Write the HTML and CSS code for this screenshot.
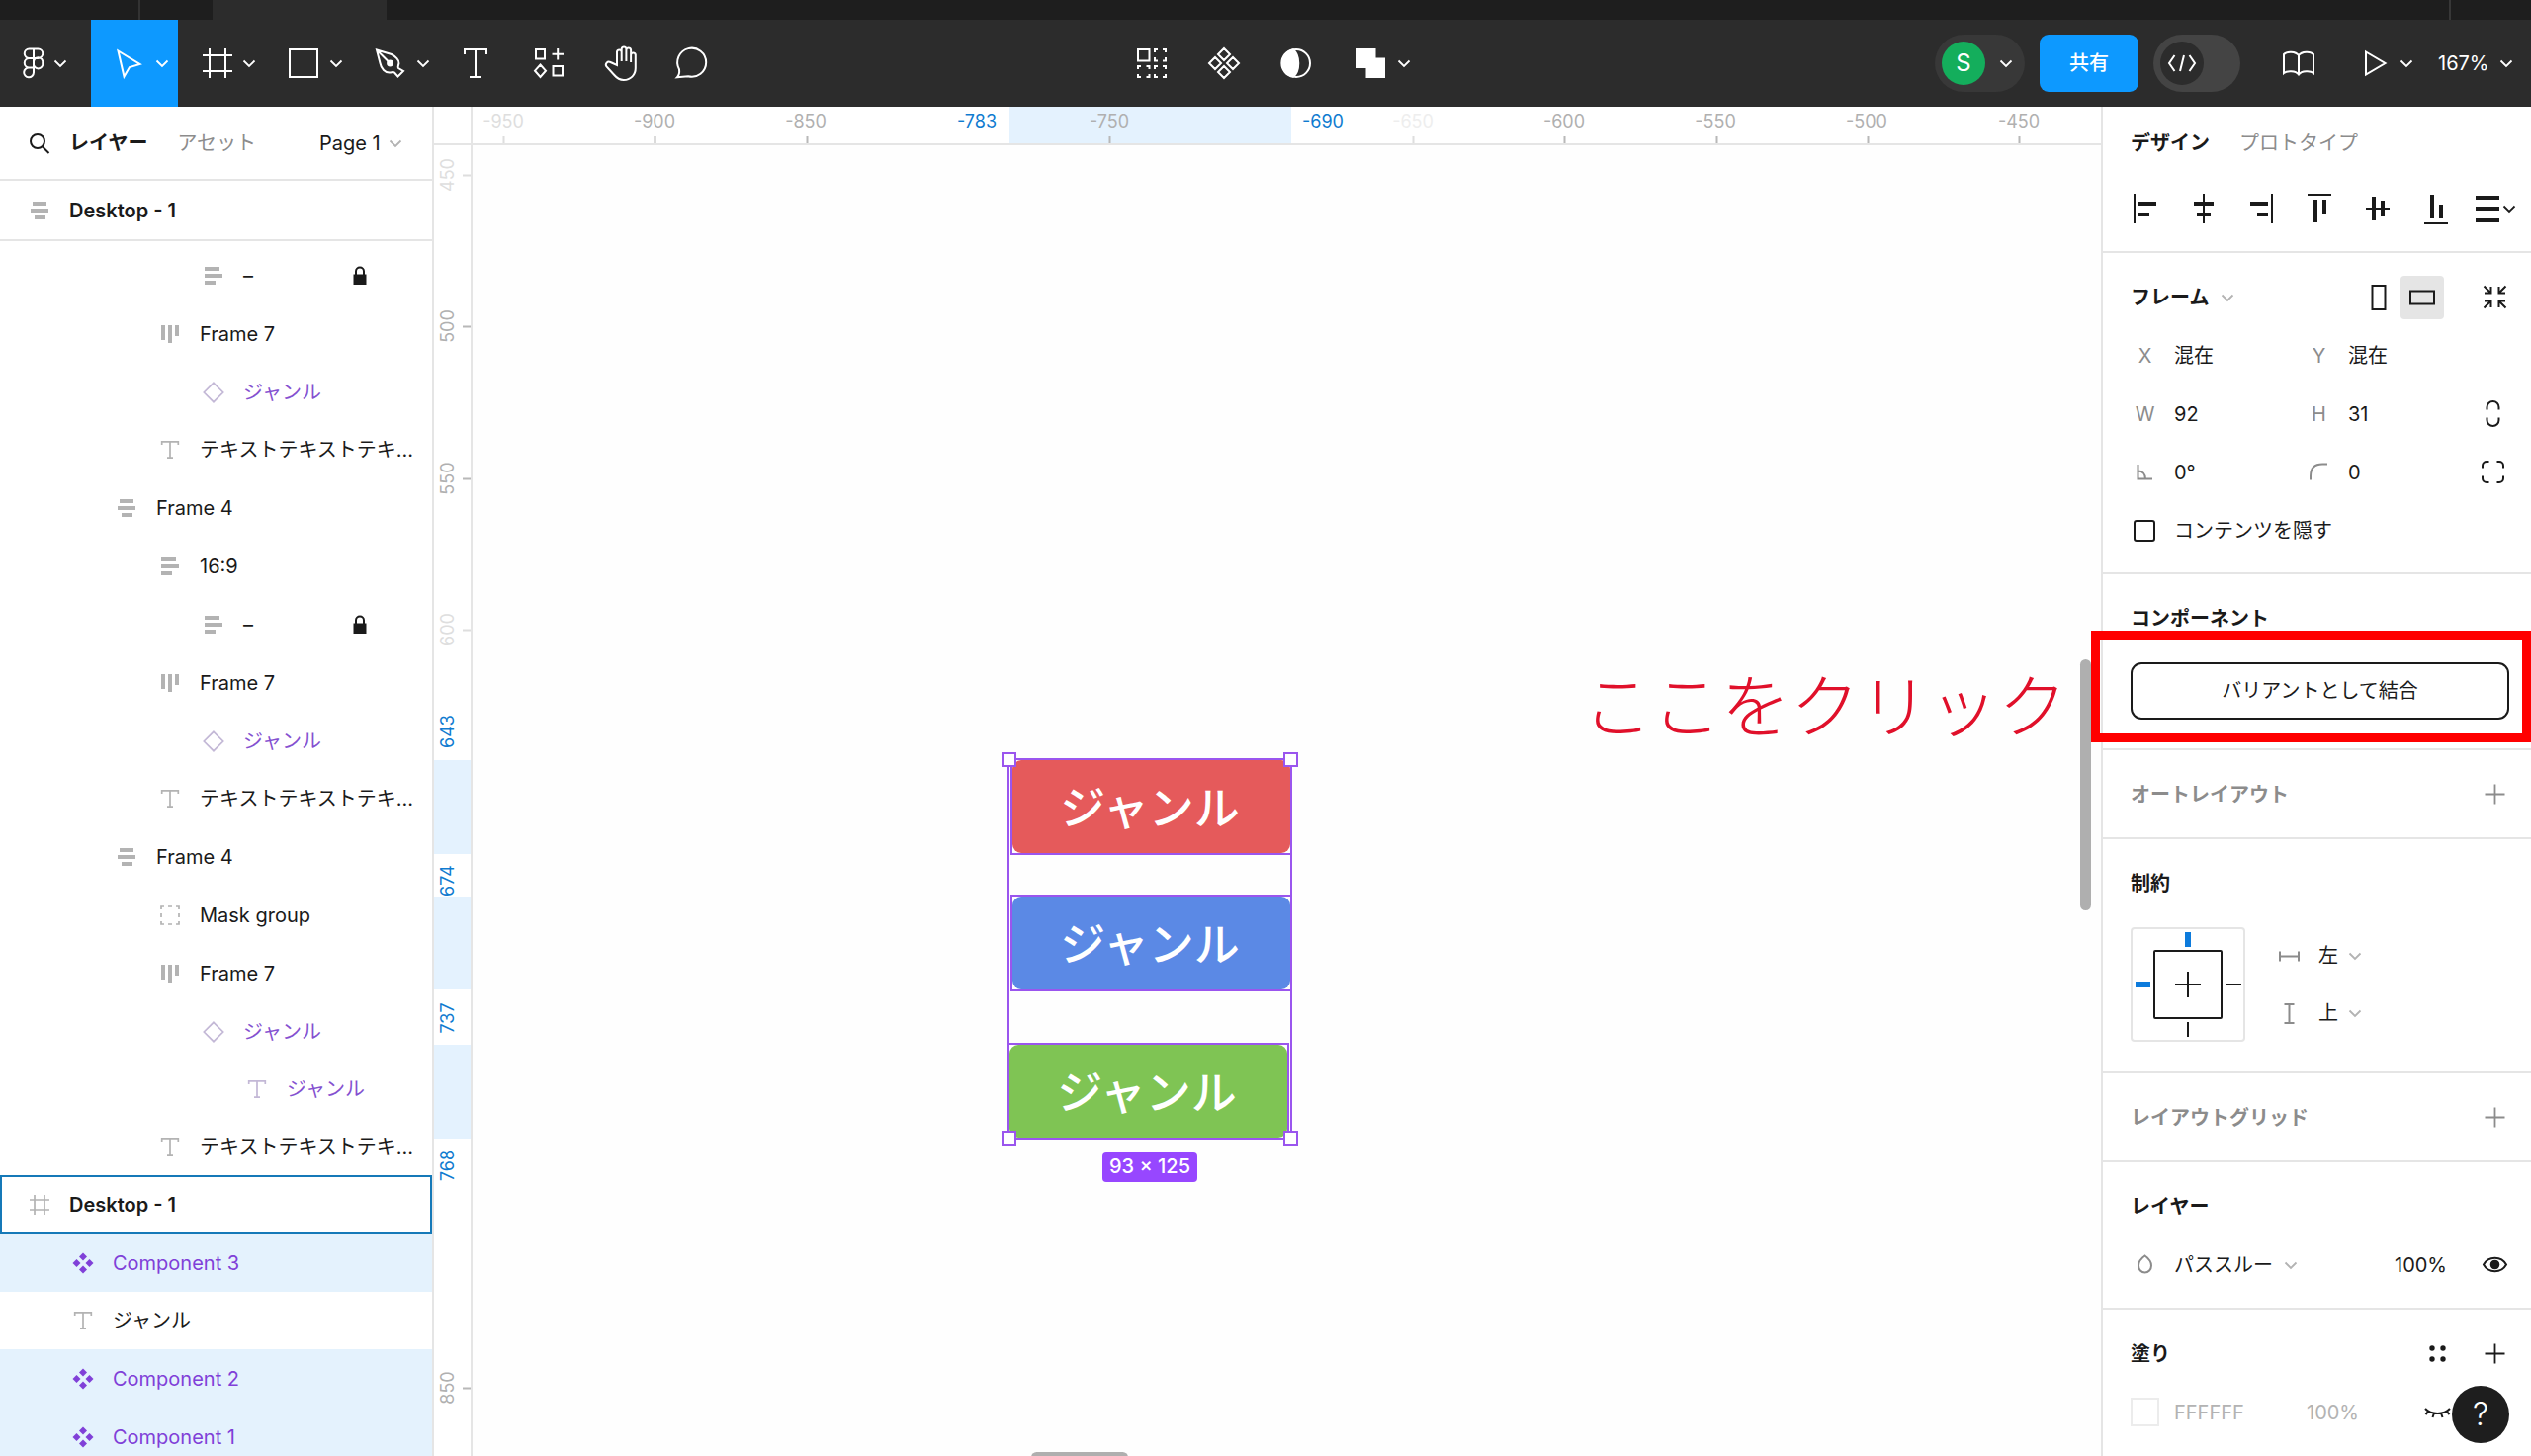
FILE: index.html
```html
<!DOCTYPE html>
<html lang="ja">
<head>
<meta charset="utf-8">
<title>Desktop - 1</title>
<link rel="stylesheet" href="styles.css">
</head>
<body>
<svg class="sprite" aria-hidden="true">
  <symbol id="chev" viewBox="0 0 14 14"><path d="M1.500 4.500 7 10l5.500-5.500" fill="none" stroke="currentColor" stroke-width="1.800"/></symbol>
  <symbol id="lines-left" viewBox="0 0 22 22"><path d="M2 2h15v4H2zM2 9h18v4H2zM2 16h11v4H2z" fill="currentColor"/></symbol>
  <symbol id="lines-center" viewBox="0 0 22 22"><path d="M4 2h14v4H4zM2 9h18v4H2zM6 16h11v4H6z" fill="currentColor"/></symbol>
  <symbol id="cols" viewBox="0 0 22 22"><path d="M2 2h4v15H2zM9 2h4v18H9zM16 2h4v11h-4z" fill="currentColor"/></symbol>
  <symbol id="text" viewBox="0 0 22 22"><path d="M2.700 6V2.800h16.600V6M11 2.800v16.400M8 19.200h6" fill="none" stroke="currentColor" stroke-width="1.700"/></symbol>
  <symbol id="diamond" viewBox="0 0 22 22"><path d="M11 1.300 20.700 11 11 20.700 1.300 11z" fill="none" stroke="currentColor" stroke-width="1.700"/></symbol>
  <symbol id="mask" viewBox="0 0 22 22"><path d="M2 5V2h3M9 2h4M17 2h3v3M20 9v4M20 17v3h-3M13 20H9M5 20H2v-3M2 13V9" fill="none" stroke="currentColor" stroke-width="1.700"/></symbol>
  <symbol id="frame" viewBox="0 0 22 22"><path d="M6 1v20M16 1v20M1 6h20M1 16h20" fill="none" stroke="currentColor" stroke-width="1.700"/></symbol>
  <symbol id="comp" viewBox="0 0 22 22"><path d="M11 .5 15 4.500 11 8.500 7 4.500zM11 13.500l4 4-4 4-4-4zM4.500 7l4 4-4 4-4-4zM17.500 7l4 4-4 4-4-4z" fill="currentColor"/></symbol>
  <symbol id="lock" viewBox="0 0 22 22"><path d="M4.500 9.500h13V20h-13z" fill="currentColor"/><path d="M7 10V6.500a4 4 0 0 1 8 0V10" fill="none" stroke="currentColor" stroke-width="2"/></symbol>
  <symbol id="plus" viewBox="0 0 29 29"><path d="M14.500 4.500v20M4.500 14.500h20" fill="none" stroke="currentColor" stroke-width="1.800"/></symbol>
</svg>

<div class="tabstrip">
  <span class="tab tab-home"></span><span class="tab tab-file"></span><span class="tab tab-current"></span><span class="tab-end"></span>
</div>

<header class="toolbar">
  <div class="tools">
    <button class="tool tool-menu" aria-label="メインメニュー"><svg class="ic40" viewBox="0 0 40 40"><path d="M20 5.500h-4.500a4.700 4.700 0 0 0 0 9.500H20zM20 5.500h4.500a4.700 4.700 0 0 1 0 9.500H20zM20 15h-4.500a4.700 4.700 0 0 0 0 9.500H20zM20 24.500h-4.500a4.900 4.900 0 1 0 4.500 5zM29.200 19.800a4.700 4.700 0 1 1-9.200 0 4.700 4.700 0 1 1 9.200 0z"/></svg><svg class="chev"><use href="#chev"/></svg></button>
    <button class="tool tool-on" aria-label="移動"><svg class="ic40" viewBox="0 0 40 40"><path d="M7.500 7.500 29.500 21l-10.500 3-5.500 9.500z"/></svg><svg class="chev"><use href="#chev"/></svg></button>
    <button class="tool" aria-label="フレーム"><svg class="ic40" viewBox="0 0 40 40"><path d="M12 5v30M28 5v30M5 12h30M5 28h30"/></svg><svg class="chev"><use href="#chev"/></svg></button>
    <button class="tool" aria-label="長方形"><svg class="ic40" viewBox="0 0 40 40"><path d="M5 6h28v28H5z"/></svg><svg class="chev"><use href="#chev"/></svg></button>
    <button class="tool" aria-label="ペン"><svg class="ic40" viewBox="0 0 40 40"><path d="M5 6.500 20 11c4 2 8 6 7.500 9-.3 2-1.500 4-.5 5l5 3-5.500 5.500-3.500-4c-1.500-1-3 0-4.500 0-5 .5-9-4-10-9.500zM5 6.500 18 19.500"/><circle cx="18.500" cy="20" r="2.400" fill="currentColor"/></svg><svg class="chev"><use href="#chev"/></svg></button>
    <button class="tool tool-solo" aria-label="テキスト"><svg class="ic40" viewBox="0 0 40 40"><path d="M9 11V6h22v5M20 6v28M14 34h12"/></svg></button>
    <button class="tool tool-solo" aria-label="リソース"><svg class="ic40" viewBox="0 0 40 40"><path d="M8 6h9v9.500H8zM25.500 23H35v9.500h-9.500zM12.500 21.500 18 27.700 12.500 34 7 27.700zM30.200 5v11.500M24.500 10.700H36"/></svg></button>
    <button class="tool tool-solo" aria-label="手のひら"><svg class="ic40" viewBox="0 0 40 40"><path d="M13 22V8.500a2.400 2.400 0 0 1 4.700 0V18 5.500a2.400 2.400 0 0 1 4.700 0V18 6.500a2.400 2.400 0 0 1 4.700 0V19v-7.500a2.400 2.400 0 0 1 4.700 0V25c0 7-5 12-12 12-4 0-7-2-9.500-5L2.500 23.500c-2-3 1-6 4-4.500z" transform="translate(4)"/></svg></button>
    <button class="tool tool-solo" aria-label="コメント"><svg class="ic40" viewBox="0 0 40 40"><path d="M5 34.200c2-2 2.500-4 2-8A14.500 14.500 0 1 1 16 33.200z"/></svg></button>
  </div>
  <div class="tools tools-mid">
    <button class="tool tool-solo" aria-label="コンポーネントセット"><svg class="ic40" viewBox="0 0 40 40"><path d="M6 6h11.500v11.500H6zM23 9V6h3M31 6h3v3M34 14v3.500h-3M26 17.500h-3V14M6 26v-3h3M14.500 23h3v3M17.500 31v3h-3M9 34H6v-3M23 26v-3h3M31 23h3v3M34 31v3h-3M26 34h-3v-3"/></svg></button>
    <button class="tool tool-solo" aria-label="コンポーネントの作成"><svg class="ic40" viewBox="0 0 40 40"><path d="M20 5l6 6-6 6-6-6zM20 23l6 6-6 6-6-6zM11 14l6 6-6 6-6-6zM29 14l6 6-6 6-6-6z"/></svg></button>
    <button class="tool tool-solo" aria-label="マスク"><svg class="ic40" viewBox="0 0 40 40"><circle cx="20" cy="20" r="14"/><path d="M17 6.200C24 12 24 28 17 33.800A14 14 0 0 1 17 6.200z" fill="currentColor"/></svg></button>
    <button class="tool" aria-label="ブール演算"><svg class="ic40" viewBox="0 0 40 40"><path d="M4 5h19.500v9.500H33V35H13.500V25H4z" fill="currentColor" stroke="none"/></svg><svg class="chev"><use href="#chev"/></svg></button>
  </div>
  <div class="actions">
    <button class="user" aria-label="ユーザー"><span class="avatar">S</span><svg class="chev"><use href="#chev"/></svg></button>
    <button class="share">共有</button>
    <button class="devmode" role="switch" aria-checked="false" aria-label="開発モード"><span class="knob"><svg class="code" viewBox="0 0 32 24"><path d="M8.500 4 3 12l5.500 8M23.500 4 29 12l-5.500 8M18 4l-4 16"/></svg></span></button>
    <button class="plain" aria-label="ライブラリ"><svg class="ic40" viewBox="0 0 40 40"><path d="M20 12c-3-4-12-4.500-15-1v19c3-2.500 12-2.500 15 1.500 3-4 12-4 15-1.500V11c-3-3.500-12-3-15 1zM20 12v19"/></svg></button>
    <button class="present" aria-label="プレゼンテーション"><svg class="play" viewBox="0 0 24 30"><path d="M2 3.500 21.500 15 2 26.500z"/></svg><svg class="chev"><use href="#chev"/></svg></button>
    <label class="zoom"><select aria-label="ズーム"><option>167%</option></select><svg class="chev"><use href="#chev"/></svg></label>
  </div>
</header>

<main class="work">
  <aside class="layers">
    <div class="layers-head">
      <svg class="search" viewBox="0 0 22 22"><circle cx="9" cy="9" r="7"/><path d="M14 14.500 20.500 21"/></svg>
      <button class="ptab ptab-on">レイヤー</button>
      <button class="ptab">アセット</button>
      <label class="page"><select aria-label="ページ"><option>Page 1</option></select><svg class="chev dim"><use href="#chev"/></svg></label>
    </div>
    <div class="layers-pin"><svg class="ic22"><use href="#lines-center"/></svg><span>Desktop - 1</span></div>
    <ul class="tree">
      <li class="row d4"><svg class="ic22"><use href="#lines-left"/></svg><span>–</span><svg class="ic22 lock"><use href="#lock"/></svg></li>
      <li class="row d3"><svg class="ic22"><use href="#cols"/></svg><span>Frame 7</span></li>
      <li class="row d4 inst"><svg class="ic22"><use href="#diamond"/></svg><span>ジャンル</span></li>
      <li class="row d3 txt"><svg class="ic22"><use href="#text"/></svg><span>テキストテキストテキ...</span></li>
      <li class="row d2"><svg class="ic22"><use href="#lines-center"/></svg><span>Frame 4</span></li>
      <li class="row d3"><svg class="ic22"><use href="#lines-left"/></svg><span>16:9</span></li>
      <li class="row d4"><svg class="ic22"><use href="#lines-left"/></svg><span>–</span><svg class="ic22 lock"><use href="#lock"/></svg></li>
      <li class="row d3"><svg class="ic22"><use href="#cols"/></svg><span>Frame 7</span></li>
      <li class="row d4 inst"><svg class="ic22"><use href="#diamond"/></svg><span>ジャンル</span></li>
      <li class="row d3 txt"><svg class="ic22"><use href="#text"/></svg><span>テキストテキストテキ...</span></li>
      <li class="row d2"><svg class="ic22"><use href="#lines-center"/></svg><span>Frame 4</span></li>
      <li class="row d3"><svg class="ic22"><use href="#mask"/></svg><span>Mask group</span></li>
      <li class="row d3"><svg class="ic22"><use href="#cols"/></svg><span>Frame 7</span></li>
      <li class="row d4 inst"><svg class="ic22"><use href="#diamond"/></svg><span>ジャンル</span></li>
      <li class="row d5 inst txt"><svg class="ic22"><use href="#text"/></svg><span>ジャンル</span></li>
      <li class="row d3 txt"><svg class="ic22"><use href="#text"/></svg><span>テキストテキストテキ...</span></li>
      <li class="row d0 outlined"><svg class="ic22"><use href="#frame"/></svg><span>Desktop - 1</span></li>
      <li class="row d1 picked"><svg class="ic22"><use href="#comp"/></svg><span>Component 3</span></li>
      <li class="row d1 txt"><svg class="ic22"><use href="#text"/></svg><span>ジャンル</span></li>
      <li class="row d1 picked"><svg class="ic22"><use href="#comp"/></svg><span>Component 2</span></li>
      <li class="row d1 picked"><svg class="ic22"><use href="#comp"/></svg><span>Component 1</span></li>
    </ul>
  </aside>

  <section class="stage">
    <div class="corner"></div>
    <svg class="ruler ruler-x">
      <rect class="span" x="543" y="0" width="285" height="37"/>
      <path class="tick" d="M184.500 30v7M338.500 30v7M644.500 30v7M1104.500 30v7M1258.500 30v7M1411.500 30v7M1564.500 30v7"/>
      <path class="tick faint" d="M31.500 30v7M951.500 30v7"/>
      <g class="marks">
        <text class="faint" x="31" y="21">-950</text><text x="184" y="21">-900</text><text x="337" y="21">-850</text>
        <text class="edge" x="510" y="21">-783</text><text x="644" y="21">-750</text><text class="edge" x="860" y="21">-690</text>
        <text class="fainter" x="951" y="21">-650</text><text x="1104" y="21">-600</text><text x="1257" y="21">-550</text><text x="1410" y="21">-500</text><text x="1564" y="21">-450</text>
      </g>
    </svg>
    <svg class="ruler ruler-y">
      <path class="span" d="M0 622h37v95H0zM0 760h37v94H0zM0 910h37v95H0z"/>
      <path class="tick" d="M29 183.500h8M29 337.500h8M29 1257.500h8"/>
      <path class="tick faint" d="M29 30.500h8M29 490.500h8"/>
      <g class="marks">
        <text class="faint" transform="translate(20 30) rotate(-90)">450</text>
        <text transform="translate(20 183) rotate(-90)">500</text>
        <text transform="translate(20 337) rotate(-90)">550</text>
        <text class="faint" transform="translate(20 490) rotate(-90)">600</text>
        <text class="edge" transform="translate(20 593) rotate(-90)">643</text>
        <text class="edge" transform="translate(20 744) rotate(-90)">674</text>
        <text class="edge" transform="translate(20 883) rotate(-90)">737</text>
        <text class="edge" transform="translate(20 1032) rotate(-90)">768</text>
        <text transform="translate(20 1257) rotate(-90)">850</text>
      </g>
    </svg>
    <div class="canvas">
      <div class="selection">
        <div class="node node-red"><span>ジャンル</span></div>
        <div class="node node-blue"><span>ジャンル</span></div>
        <div class="node node-green"><span>ジャンル</span></div>
        <i class="grip nw"></i><i class="grip ne"></i><i class="grip sw"></i><i class="grip se"></i>
        <div class="size">93 × 125</div>
      </div>
      <div class="note">ここをクリック</div>
      <div class="bar-y"></div>
      <div class="bar-x"></div>
    </div>
  </section>

  <aside class="inspector">
    <div class="itabs"><button class="ptab ptab-on">デザイン</button><button class="ptab">プロトタイプ</button></div>
    <div class="aligns">
      <button aria-label="左揃え"><svg viewBox="0 0 30 30"><path d="M3 0h2v30H3zM8 8h18v4H8zM8 19h11v4H8z"/></svg></button>
      <button aria-label="水平方向の中央揃え"><svg viewBox="0 0 30 30"><path d="M14 0h2v30h-2zM5 8h20v4H5zM8 19h14v4H8z"/></svg></button>
      <button aria-label="右揃え"><svg viewBox="0 0 30 30"><path d="M25 0h2v30h-2zM4 8h18v4H4zM11 19h11v4H11z"/></svg></button>
      <button aria-label="上揃え"><svg viewBox="0 0 30 30"><path d="M3 0h24v2H3zM9 6h4v23H9zM18 6h4v14h-4z"/></svg></button>
      <button aria-label="垂直方向の中央揃え"><svg viewBox="0 0 30 30"><path d="M3 14h24v2H3zM9 3h4v24H9zM18 7h4v16h-4z"/></svg></button>
      <button aria-label="下揃え"><svg viewBox="0 0 30 30"><path d="M3 29h24v2H3zM9 1h4v24H9zM18 11h4v14h-4z"/></svg></button>
      <button class="more" aria-label="整列"><svg viewBox="0 0 24 30"><path d="M0 2h24v4H0zM0 13h24v4H0zM0 25h24v4H0z"/></svg><svg class="chev"><use href="#chev"/></svg></button>
    </div>

    <section class="sec sec-frame">
      <div class="title">
        <label class="pick"><select class="strong" aria-label="種類"><option>フレーム</option></select><svg class="chev dim"><use href="#chev"/></svg></label>
        <span class="push"></span>
        <button class="orient" aria-label="縦向き"><svg viewBox="0 0 44 44"><path d="M15.500 10h13v24h-13z"/></svg></button>
        <button class="orient orient-on" aria-label="横向き"><svg viewBox="0 0 44 44"><path d="M10 15.500h24v13H10z"/></svg></button>
        <button class="iconbtn shrink" aria-label="サイズを内容に合わせる"><svg class="ic29 line" viewBox="0 0 29 29"><path d="M3.500 3.500l7 7M10.500 4v6.500H4M25.500 3.500l-7 7M18.500 4v6.500H25M3.500 25.500l7-7M10.500 25v-6.500H4M25.500 25.500l-7-7M18.500 25v-6.500H25"/></svg></button>
      </div>
      <div class="fields">
        <label class="field"><span class="tag">X</span><input value="混在"></label>
        <label class="field"><span class="tag">Y</span><input value="混在"></label>
        <span></span>
        <label class="field"><span class="tag">W</span><input value="92"></label>
        <label class="field"><span class="tag">H</span><input value="31"></label>
        <button class="iconbtn" aria-label="縦横比を固定"><svg class="ic29 line" viewBox="0 0 29 29"><path d="M8.500 10.500V8a6 6 0 0 1 12 0v2.500M8.500 18.500V21a6 6 0 0 0 12 0v-2.500"/></svg></button>
        <label class="field"><span class="tag"><svg class="ic29 line" viewBox="0 0 29 29"><path d="M7.500 7v14.500H22M7.500 13.500c4.500 0 7.500 3 7.500 8"/></svg></span><input aria-label="回転" value="0°"></label>
        <label class="field"><span class="tag"><svg class="ic29 line" viewBox="0 0 29 29"><path d="M6 22.500v-4C6 11 10 6.500 18 6.500h5"/></svg></span><input aria-label="角の半径" value="0"></label>
        <button class="iconbtn" aria-label="個別の角"><svg class="ic29 line" viewBox="0 0 29 29"><path d="M4 10.500V8a4 4 0 0 1 4-4h2.500M18.500 4H21a4 4 0 0 1 4 4v2.500M25 18.500V21a4 4 0 0 1-4 4h-2.500M10.500 25H8a4 4 0 0 1-4-4v-2.500"/></svg></button>
      </div>
      <label class="check"><input type="checkbox"><span>コンテンツを隠す</span></label>
    </section>

    <section class="sec sec-comp">
      <div class="title"><h2>コンポーネント</h2></div>
      <button class="combine">バリアントとして結合</button>
      <div class="callout"></div>
    </section>

    <section class="sec">
      <div class="title off"><h2>オートレイアウト</h2><span class="push"></span><button class="iconbtn" aria-label="追加"><svg class="ic29"><use href="#plus"/></svg></button></div>
    </section>

    <section class="sec sec-limits">
      <div class="title"><h2>制約</h2></div>
      <div class="limits">
        <svg class="pinbox" viewBox="0 0 116 116"><rect x="1" y="1" width="114" height="114" rx="3" fill="#fff" stroke="#e5e5e5" stroke-width="2"/><rect x="24" y="24" width="68" height="68" rx="1" fill="none" stroke="#1a1a1a" stroke-width="2"/><path d="M58 45v26M45 58h26M97 58h15M58 96v15" stroke="#1a1a1a" stroke-width="2"/><path d="M58 5v15M5 58h15" stroke="#0d7bdc" stroke-width="6"/></svg>
        <div class="axes">
          <label class="axis"><svg class="ic29 line gray" viewBox="0 0 29 29"><path d="M5 9.500v10M24 9.500v10M5 14.500h19"/></svg><select aria-label="水平方向の制約"><option>左</option></select><svg class="chev dim"><use href="#chev"/></svg></label>
          <label class="axis"><svg class="ic29 line gray" viewBox="0 0 29 29"><path d="M9.500 5h10M9.500 24h10M14.500 5v19"/></svg><select aria-label="垂直方向の制約"><option>上</option></select><svg class="chev dim"><use href="#chev"/></svg></label>
        </div>
      </div>
    </section>

    <section class="sec">
      <div class="title off"><h2>レイアウトグリッド</h2><span class="push"></span><button class="iconbtn" aria-label="追加"><svg class="ic29"><use href="#plus"/></svg></button></div>
    </section>

    <section class="sec">
      <div class="title"><h2>レイヤー</h2></div>
      <div class="line-row">
        <svg class="ic29 line gray" viewBox="0 0 29 29"><path d="M14.500 5.500c3.500 2.500 6.500 6 6.500 10a6.500 7 0 0 1-13 0c0-4 3-7.500 6.500-10z"/></svg>
        <label class="pick blend"><select aria-label="描画モード"><option>パススルー</option></select><svg class="chev dim"><use href="#chev"/></svg></label>
        <span class="push"></span>
        <input class="pct" aria-label="不透明度" value="100%">
        <button class="iconbtn" aria-label="表示"><svg class="ic29 line" viewBox="0 0 29 29"><path d="M3 14.500c5-9 18-9 23 0-5 9-18 9-23 0z"/><circle cx="14.500" cy="14.500" r="3.800" fill="currentColor"/></svg></button>
      </div>
    </section>

    <section class="sec sec-fill">
      <div class="title"><h2>塗り</h2><span class="push"></span>
        <button class="iconbtn" aria-label="スタイル"><svg class="ic29" viewBox="0 0 29 29"><g fill="currentColor"><circle cx="9" cy="9" r="2.700"/><circle cx="20" cy="9" r="2.700"/><circle cx="9" cy="20" r="2.700"/><circle cx="20" cy="20" r="2.700"/></g></svg></button>
        <button class="iconbtn" aria-label="追加"><svg class="ic29"><use href="#plus"/></svg></button></div>
      <div class="line-row faded">
        <button class="swatch" aria-label="色"></button>
        <input class="hex" aria-label="カラーコード" value="FFFFFF">
        <input class="pct" aria-label="塗りの不透明度" value="100%">
        <span class="push"></span>
        <button class="iconbtn dark" aria-label="非表示"><svg class="ic29 line" viewBox="0 0 29 29"><path d="M2 11c6 6.500 19 6.500 25 0M5.500 13.500 2.500 17M11 15.500l-1.500 4.500M18 15.500l1.500 4.500M23.500 13.500l3 3.500"/></svg></button>
        <span class="iconbtn"></span>
      </div>
    </section>
    <button class="help" aria-label="ヘルプ"><span>?</span></button>
  </aside>
</main>
</body>
</html>
```

FILE: styles.css
```css
* { box-sizing: border-box; }

body {
  margin: 0;
  height: 100vh;
  display: flex;
  flex-direction: column;
  overflow: hidden;
  background: #fff;
  color: #1a1a1a;
  font: 400 20px/28px Inter, "Noto Sans CJK JP", sans-serif;
}

button, select, input {
  margin: 0;
  padding: 0;
  border: 0;
  background: none;
  color: inherit;
  font: inherit;
  appearance: none;
  border-radius: 0;
}
input { min-width: 0; }
svg { display: block; flex: none; }
h2 { margin: 0; font: inherit; font-weight: 600; }
.sprite { position: absolute; width: 0; height: 0; }
.chev { width: 14px; height: 14px; }
.dim { color: #b3b3b3; }
.push { flex: 1; }
.ic22 { width: 22px; height: 22px; }
.ic29 { width: 29px; height: 29px; }
.ic40 { width: 40px; height: 40px; fill: none; stroke: currentColor; stroke-width: 2; overflow: visible; }
.line { fill: none; stroke: currentColor; stroke-width: 2; }
.gray { color: #8c8c8c; }

/* window tabs */
.tabstrip { display: flex; height: 20px; background: #1e1e1e; flex: none; }
.tab-home { width: 142px; border-right: 2px solid #333; }
.tab-file { width: 73px; }
.tab-current { width: 176px; background: #2c2c2c; }
.tab-end { margin-left: auto; width: 83px; border-left: 2px solid #383838; }

/* toolbar */
.toolbar {
  display: grid;
  grid-template-columns: 1fr auto 1fr;
  height: 88px;
  flex: none;
  background: #2c2c2c;
  color: #fff;
}
.tools { display: flex; }
.tools-mid { padding-left: 4px; }
.tool { display: flex; align-items: center; width: 88px; padding-left: 20px; gap: 5px; }
.tool-menu { width: 92px; padding-left: 14px; gap: 0; }
.tool-on { background: #0d99ff; }
.tool-solo { width: 73px; padding: 0; justify-content: center; }
.actions { display: flex; align-items: center; justify-content: flex-end; padding-right: 18px; }
.user {
  display: flex; align-items: center; gap: 14px;
  width: 91px; height: 58px; padding-left: 7px;
  border-radius: 29px; background: #383838;
}
.avatar { width: 44px; height: 44px; border-radius: 50%; background: #14ae5c; font-size: 24px; line-height: 44px; text-align: center; }
.share { width: 100px; height: 58px; margin-left: 15px; border-radius: 9px; background: #0d99ff; font-weight: 500; }
.devmode { width: 88px; height: 58px; margin-left: 15px; padding-left: 7px; border-radius: 29px; background: #444; }
.knob { display: flex; align-items: center; justify-content: center; width: 44px; height: 44px; border-radius: 50%; background: #2c2c2c; }
.code { width: 32px; height: 24px; fill: none; stroke: currentColor; stroke-width: 2; }
.plain { margin-left: 39px; }
.present { display: flex; align-items: center; gap: 12px; margin-left: 46px; }
.play { width: 24px; height: 30px; fill: none; stroke: currentColor; stroke-width: 2; }
.zoom { display: flex; align-items: center; gap: 10px; margin-left: 25px; }

/* columns under the toolbar */
.work { flex: 1; min-height: 0; display: grid; grid-template-columns: 439px 1fr 435px; }

.layers { min-height: 0; overflow: hidden; border-right: 2px solid #e5e5e5; }
.layers-head { display: flex; align-items: center; height: 75px; padding: 0 30px 0 29px; border-bottom: 2px solid #e5e5e5; }
.search { width: 22px; height: 22px; fill: none; stroke: currentColor; stroke-width: 2; margin-right: 19px; }
.ptab { color: #8c8c8c; margin-right: 30px; }
.ptab-on { color: #1a1a1a; font-weight: 600; }
.page { display: flex; align-items: center; gap: 8px; margin-left: auto; }
.layers-pin { display: flex; align-items: center; gap: 19px; height: 61px; padding-left: 29px; border-bottom: 2px solid #e5e5e5; font-weight: 600; }
.layers-pin .ic22 { color: #b3b3b3; }

.tree { list-style: none; margin: 0; padding: 5px 0 0; }
.row { display: flex; align-items: center; gap: 19px; height: 59px; padding-right: 62px; white-space: nowrap; }
.row .ic22 { color: #b3b3b3; }
.row.txt { height: 58px; padding-right: 0; }
.row .lock { margin-left: auto; color: #1a1a1a; }
.d0 { padding-left: 29px; font-weight: 600; }
.d1 { padding-left: 73px; }
.d2 { padding-left: 117px; }
.d3 { padding-left: 161px; }
.d4 { padding-left: 205px; }
.d5 { padding-left: 249px; }
.row.inst { color: #8450d0; }
.row.inst .ic22 { color: #c3b8d6; }
.row.picked, .row.picked .ic22 { color: #8040d8; }
.picked { background: #e4f2fd; }
.outlined { box-shadow: inset 0 0 0 2px #1579b8; }

/* canvas with its rulers */
.stage { display: grid; grid-template: 39px 1fr / 39px 1fr; min-width: 0; min-height: 0; overflow: hidden; }
.corner { border-right: 2px solid #e5e5e5; border-bottom: 2px solid #e5e5e5; }
.ruler { width: 100%; height: 100%; }
.ruler-x { border-bottom: 2px solid #e5e5e5; }
.ruler-y { border-right: 2px solid #e5e5e5; }
.span { fill: #e4f2fe; }
.tick { stroke: #b8b8b8; stroke-width: 2; }
.tick.faint { stroke: #dedede; }
.marks { font-size: 18px; fill: #b0b0b0; text-anchor: middle; }
.marks .faint { fill: #dedede; }
.marks .fainter { fill: #eee; }
.marks .edge { fill: #0f7bd0; }

.canvas { position: relative; overflow: hidden; background: #fefefe; }
.selection { position: absolute; left: 541px; top: 620px; width: 288px; height: 386px; border: 2px solid #9a55ee; }
.node {
  position: absolute; left: 1px; width: 285px; height: 98px;
  border: 2px solid #9a55ee;
  color: #fff; font-size: 46px; line-height: 92px; font-weight: 500; text-align: center;
}
.node span { display: block; padding: 2px 3px 0 0; border-radius: 9px; }
.node-red { top: -2px; }
.node-red span { background: #e55a5b; }
.node-blue { top: 136px; }
.node-blue span { background: #5b89e5; }
.node-green { top: 286px; left: -2px; }
.node-green span { background: #7fc454; }
.grip { position: absolute; width: 15px; height: 15px; background: #fff; border: 2px solid #9a55ee; }
.nw { left: -8px; top: -8px; }
.ne { right: -8px; top: -8px; }
.sw { left: -8px; bottom: -8px; }
.se { right: -8px; bottom: -8px; }
.size {
  position: absolute; left: 94px; top: 396px; width: 96px; height: 31px;
  border-radius: 4px; background: #9747ff; color: #fff;
  font-weight: 500; line-height: 31px; text-align: center; white-space: nowrap;
}
.note {
  position: absolute; right: 34px; top: 519px;
  color: #e0102a; font-size: 70px; line-height: 100px; font-weight: 300; white-space: nowrap;
}
.bar-y { position: absolute; right: 10px; top: 520px; width: 11px; height: 254px; border-radius: 6px; background: #afafaf; }
.bar-x { position: absolute; left: 565px; bottom: -7px; width: 98px; height: 11px; border-radius: 6px; background: #afafaf; }

/* inspector */
.inspector { position: relative; min-height: 0; border-left: 2px solid #e5e5e5; }
.itabs { display: flex; align-items: center; height: 73px; padding-left: 28px; }
.aligns { display: flex; align-items: center; height: 75px; padding: 0 0 14px 28px; border-bottom: 2px solid #e5e5e5; }
.aligns button { width: 59px; }
.aligns svg { width: 30px; height: 30px; fill: currentColor; overflow: visible; }
.aligns .more { display: flex; align-items: center; gap: 3px; padding-left: 3px; margin-left: -6px; }
.aligns .more svg { width: 24px; }
.aligns .more .chev { width: 14px; height: 14px; }

.sec { position: relative; padding: 15px 22px 14px 28px; border-bottom: 2px solid #e5e5e5; }
.sec-frame { padding-bottom: 13px; }
.sec-comp { padding-bottom: 29px; }
.sec-limits { padding-bottom: 30px; }
.sec-fill { border-bottom: 0; }
.title { display: flex; align-items: center; height: 59px; gap: 29px; }
.title.off { color: #8c8c8c; }
.strong { font-weight: 600; }
.pick { display: flex; align-items: center; gap: 11px; }
.iconbtn { width: 29px; height: 29px; flex: none; }
.sec-frame .title { gap: 0; }
.orient { width: 44px; height: 44px; border-radius: 4px; }
.orient svg { width: 44px; height: 44px; fill: none; stroke: currentColor; stroke-width: 2; }
.orient-on { background: #e5e5e5; }
.shrink { margin-left: 37px; }

.fields { display: grid; grid-template-columns: 176px 176px 29px; grid-auto-rows: 59px; align-items: center; }
.field { display: flex; align-items: center; gap: 15px; }
.field input { width: 100px; }
.tag { width: 29px; flex: none; text-align: center; color: #8c8c8c; }
.check { display: flex; align-items: center; gap: 19px; height: 59px; padding-left: 3px; }
.check input { width: 22px; height: 22px; border: 2px solid #1a1a1a; border-radius: 3px; }

.combine { display: block; width: 100%; height: 58px; margin-top: 15px; border: 2px solid #1a1a1a; border-radius: 11px; }
.callout { position: absolute; left: -12px; right: 0; top: 57px; height: 113px; border: 9px solid #f00; pointer-events: none; }

.limits { display: flex; gap: 30px; margin-top: 15px; }
.pinbox { width: 116px; height: 116px; }
.axis { display: flex; align-items: center; height: 58px; gap: 15px; }
.axis .chev { margin-left: -5px; }

.line-row { display: flex; align-items: center; height: 59px; }
.blend { margin-left: 15px; }
.pct { width: 87px; }
.faded { color: #b3b3b3; }
.faded .dark { color: #1a1a1a; margin-right: 29px; }
.swatch { width: 29px; height: 29px; border: 2px solid #ececec; margin-right: 15px; }
.hex { width: 134px; }

.help {
  position: absolute; right: 22px; bottom: 13px; width: 58px; height: 58px;
  border-radius: 50%; background: #1e1e1e; color: #fff;
  font-size: 32px; line-height: 58px; font-weight: 300; text-align: center;
}
```
